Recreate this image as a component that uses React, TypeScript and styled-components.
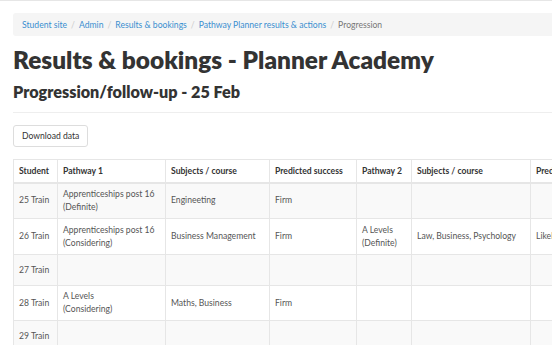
import React from 'react'
import styled, { createGlobalStyle } from 'styled-components'

const GlobalStyle = createGlobalStyle`
  html, body {
    margin: 0;
    padding: 0;
    background: #fff;
    overflow: hidden;
  }
  body {
    font-family: Lato, 'Open Sans', sans-serif;
    color: #333;
  }
`

const Page = styled.div`
  border-top: 1px solid #e6e6e6;
  padding: 12px 0 0 13px;
  width: 700px;
`

const Breadcrumb = styled.ol`
  list-style: none;
  margin: 0;
  padding: 0 9px;
  height: 23px;
  display: flex;
  align-items: center;
  background: #f5f5f5;
  border-radius: 3px;
  font-size: 8.6px;
`

const Crumb = styled.li<{ $active?: boolean }>`
  color: ${(p) => (p.$active ? '#777' : '#3a8fd0')};
  &:not(:first-child)::before {
    content: '/';
    color: #ccc;
    padding: 0 4px;
  }
`

const Title = styled.h1`
  margin: 9px 0 0;
  font-size: 24.4px;
  line-height: 30px;
  font-weight: 800;
  color: #333;
`

const Subtitle = styled.h2`
  margin: 7px 0 0;
  font-size: 16.2px;
  line-height: 20px;
  font-weight: 800;
  color: #333;
`

const Rule = styled.hr`
  margin: 10px 0 0;
  border: 0;
  border-top: 1px solid #eee;
`

const Button = styled.button`
  margin-top: 12px;
  height: 22px;
  padding: 0 8px;
  font-family: inherit;
  font-size: 8.6px;
  color: #333;
  background: #fff;
  border: 1px solid #ddd;
  border-radius: 3px;
  display: block;
`

const Table = styled.table`
  margin-top: 12px;
  border-collapse: collapse;
  font-size: 8.6px;
  table-layout: fixed;
`

const Th = styled.th<{ $w: number }>`
  box-sizing: border-box;
  width: ${(p) => p.$w}px;
  height: 23px;
  text-align: left;
  font-weight: 700;
  padding: 0 5px;
  border: 1px solid #e6e6e6;
  border-bottom-width: 2px;
  color: #333;
  white-space: nowrap;
  overflow: hidden;
`

const Tr = styled.tr<{ $striped: boolean; $h: number }>`
  background: ${(p) => (p.$striped ? '#f9f9f9' : '#fff')};
  height: ${(p) => p.$h}px;
`

const Td = styled.td`
  padding: 0 5px;
  border: 1px solid #e6e6e6;
  line-height: 13px;
  color: #555;
  vertical-align: middle;
  white-space: nowrap;
  overflow: hidden;
`

const columns = [
  { label: 'Student', w: 44 },
  { label: 'Pathway 1', w: 108 },
  { label: 'Subjects / course', w: 104 },
  { label: 'Predicted success', w: 87 },
  { label: 'Pathway 2', w: 55 },
  { label: 'Subjects / course', w: 119 },
  { label: 'Predicted success', w: 87 },
]

const rows: { h: number; cells: string[][] }[] = [
  { h: 36, cells: [['25 Train'], ['Apprenticeships post 16', '(Definite)'], ['Engineeting'], ['Firm'], [], [], []] },
  {
    h: 36,
    cells: [
      ['26 Train'],
      ['Apprenticeships post 16', '(Considering)'],
      ['Business Management'],
      ['Firm'],
      ['A Levels', '(Definite)'],
      ['Law, Business, Psychology'],
      ['Likely'],
    ],
  },
  { h: 31, cells: [['27 Train'], [], [], [], [], [], []] },
  { h: 35, cells: [['28 Train'], ['A Levels', '(Considering)'], ['Maths, Business'], ['Firm'], [], [], []] },
  { h: 31, cells: [['29 Train'], [], [], [], [], [], []] },
]

export default function App() {
  return (
    <Page>
      <GlobalStyle />
      <Breadcrumb>
        <Crumb>Student site</Crumb>
        <Crumb>Admin</Crumb>
        <Crumb>Results &amp; bookings</Crumb>
        <Crumb>Pathway Planner results &amp; actions</Crumb>
        <Crumb $active>Progression</Crumb>
      </Breadcrumb>
      <Title>Results &amp; bookings - Planner Academy</Title>
      <Subtitle>Progression/follow-up - 25 Feb</Subtitle>
      <Rule />
      <Button>Download data</Button>
      <Table>
        <thead>
          <tr>
            {columns.map((c, i) => (
              <Th key={i} $w={c.w}>
                {c.label}
              </Th>
            ))}
          </tr>
        </thead>
        <tbody>
          {rows.map((r, i) => (
            <Tr key={i} $striped={i % 2 === 0} $h={r.h}>
              {r.cells.map((lines, j) => (
                <Td key={j}>
                  {lines.map((l, k) => (
                    <div key={k}>{l}</div>
                  ))}
                </Td>
              ))}
            </Tr>
          ))}
        </tbody>
      </Table>
    </Page>
  )
}
